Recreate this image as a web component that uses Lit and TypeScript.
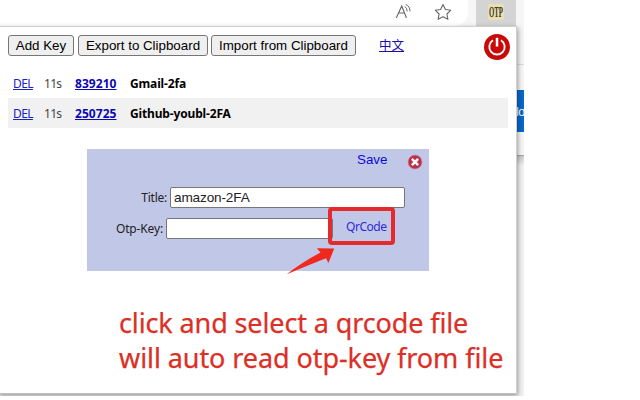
import { LitElement, html, css } from "lit";
import { customElement, property } from "lit/decorators.js";

interface Entry {
  code: string;
  name: string;
  left: number;
}

const entries: Entry[] = [
  { code: "839210", name: "Gmail-2fa", left: 11 },
  { code: "250725", name: "Github-youbl-2FA", left: 11 },
];

@customElement("otp-form")
class OtpForm extends LitElement {
  @property() name = "";

  static styles = css`
    :host {
      position: relative;
      display: block;
      width: 342px;
      height: 122px;
      box-sizing: border-box;
      background: #c1c8e7;
      font: 12px/16px "Noto Sans", sans-serif;
      color: #222;
    }
    .head { display: flex; height: 38px; padding-left: 270px; }
    .save {
      width: 30px;
      margin-top: 3px;
      font: 13.33px/16px "Liberation Sans", sans-serif;
      color: #0c08d8;
      white-space: nowrap;
    }
    .close { width: 16px; height: 16px; margin: 5px 0 0 19.5px; }
    .line { display: flex; align-items: center; height: 21px; margin-bottom: 10px; }
    .label { text-align: right; margin-right: 3px; white-space: nowrap; }
    .title { width: 80px; letter-spacing: -0.25px; }
    .key { width: 76px; letter-spacing: -0.15px; }
    .input {
      box-sizing: border-box;
      height: 21px;
      border: 1px solid #767676;
      border-radius: 2px;
      background: #fff;
      padding: 0 3px;
      margin: 0;
      font: 13.6px "Liberation Sans", sans-serif;
      color: #222;
      letter-spacing: -0.15px;
    }
    .wide { width: 235px; }
    .narrow { width: 167px; }
    .qr { margin-left: 13px; margin-top: -4px; color: #3029dc; letter-spacing: -0.45px; }
    .frame {
      position: absolute;
      left: 241px;
      top: 58px;
      width: 67px;
      height: 38px;
      box-sizing: border-box;
      border: 4px solid #e42a2a;
      border-radius: 4px;
    }
    .arrow { position: absolute; left: 198px; top: 96px; }
  `;

  render() {
    return html`
      <div class="head">
        <span class="save">Save</span>
        <svg class="close" viewBox="0 0 16 16">
          <circle cx="8" cy="8" r="7" fill="#b9304c" stroke="#d88ba5" stroke-width=".6" />
          <path d="M5.8 5.8 L10.2 10.2 M10.2 5.8 L5.8 10.2" stroke="#fff" stroke-width="2.5" stroke-linecap="square" />
        </svg>
      </div>
      <div class="line">
        <span class="label title">Title:</span>
        <input class="input wide" .value=${this.name} />
      </div>
      <div class="line">
        <span class="label key">Otp-Key:</span>
        <input class="input narrow" />
        <span class="qr">QrCode</span>
      </div>
      <div class="frame"></div>
      <svg class="arrow" width="52" height="32" viewBox="0 0 52 32">
        <path d="M1.7 29.3 Q18 16.5 35.5 7.6 L31.8 3.3 L49.2 3.6 L43.4 18 L41 13.2 Q21 21 1.7 29.3 Z" fill="#f0281e" />
      </svg>
    `;
  }
}

@customElement("app-root")
class AppRoot extends LitElement {
  static styles = css`
    :host {
      position: relative;
      display: block;
      width: 640px;
      height: 400px;
      overflow: hidden;
      background: #fff;
      font-family: "Noto Sans", "Noto Sans CJK SC", sans-serif;
    }
    .window { position: relative; width: 524px; height: 396px; overflow: hidden; background: #f5f5f5; }
    .toolbar { display: flex; height: 26px; background: #f6f6f6; }
    .omnibox {
      display: flex;
      box-sizing: border-box;
      width: 468px;
      height: 26px;
      padding-left: 394px;
      background: #fff;
      border-radius: 0 0 14px 0;
    }
    .extension {
      display: flex;
      justify-content: center;
      width: 40px;
      margin-left: 8px;
      background: #d4d4d4;
    }
    .otp { width: 16px; height: 16px; margin-top: 4px; overflow: visible; }
    .page { position: absolute; right: 0; top: 26px; width: 8px; height: 370px; background: #f3f3f3; }
    .bar { height: 38px; border-bottom: 1px solid #ddd; background: #f5f5f5; }
    .content { height: 91px; padding-top: 25px; box-sizing: border-box; border-bottom: 1px solid #aaa; background: #f7f7f7; }
    .blue {
      display: flex;
      align-items: center;
      height: 42px;
      background: #0669cb;
      color: #fff;
      font: 13px "Liberation Sans", sans-serif;
      letter-spacing: -0.8px;
    }
    .below { height: 9px; background: linear-gradient(#c8c8c8, #f1f1f1); }
    .popup {
      position: absolute;
      left: -2px;
      top: 26px;
      width: 519px;
      height: 368px;
      box-sizing: border-box;
      padding-left: 10px;
      border-top: 1px solid #d0d0d0;
      border-right: 1px solid #cfcfcf;
      border-bottom: 1px solid #c0c0c0;
      background: #fff;
      box-shadow: 1px 2px 5px rgba(0, 0, 0, 0.38);
    }
    .actions { display: flex; height: 42px; padding-top: 8px; box-sizing: border-box; }
    .btn {
      box-sizing: border-box;
      height: 21px;
      padding: 0;
      border: 1px solid #767676;
      border-radius: 3px;
      background: #efefef;
      font: 13.33px "Liberation Sans", sans-serif;
      color: #000;
      white-space: nowrap;
    }
    .add { width: 66px; margin-right: 4px; }
    .export { width: 130px; margin-right: 3px; }
    .import { width: 145px; }
    .lang { margin: 2px 0 0 23px; width: 26px; font-size: 12.5px; line-height: 18px; color: #1a0dab; text-decoration: underline; }
    .power { width: 28px; height: 28px; margin: -2px 0 0 77.5px; }
    .row {
      display: grid;
      grid-template-columns: 31px 31px 55px 1fr;
      align-items: center;
      width: 500px;
      height: 30px;
      padding-left: 5px;
      box-sizing: border-box;
      font-size: 12px;
      white-space: nowrap;
    }
    .rows { margin-top: -1px; }
    .odd { background: #f1f1f1; }
    .del { color: #1a22c0; text-decoration: underline; letter-spacing: -0.6px; }
    .time { color: #444; letter-spacing: -0.7px; }
    .code { color: #0a08b4; font-weight: 700; text-decoration: underline; letter-spacing: 0.05px; }
    .name { font-weight: 700; color: #000; letter-spacing: -0.15px; }
    .form { margin: 21px 0 0 79px; }
    .note { margin: 34px 0 0 111px; font-size: 27px; line-height: 35px; color: #dc2f26; white-space: nowrap; -webkit-text-stroke: 0.25px #dc2f26; }
    .first { letter-spacing: -0.12px; }
    .second { letter-spacing: -0.08px; }
  `;

  private row(e: Entry, i: number) {
    return html`<div class="row ${i % 2 ? "odd" : ""}">
      <span class="del">DEL</span><span class="time">${e.left}s</span>
      <span class="code">${e.code}</span><span class="name">${e.name}</span>
    </div>`;
  }

  render() {
    return html`
      <div class="window">
        <div class="toolbar">
          <div class="omnibox">
            <svg width="60" height="26" viewBox="0 0 60 26" fill="none" stroke="#666" stroke-width="1.1" stroke-linecap="round">
              <path d="M2.5 17.5 L7.7 6 L12.3 17.5 M4.7 13 H10.6" />
              <path d="M11 6.8 Q13.2 8 13.2 11 M12 4.5 Q16.3 6.7 16 11" stroke-width="1" />
              <path d="M49 4.5 L51.4 9.5 L56.8 10.2 L52.9 14 L53.9 19.3 L49 16.7 L44.1 19.3 L45.1 14 L41.2 10.2 L46.6 9.5 Z" stroke-linejoin="round" />
            </svg>
          </div>
          <div class="extension">
            <svg class="otp" viewBox="0 0 16 16">
              <rect width="16" height="16" rx="1.5" fill="#e9dfb2" />
              <text transform="translate(0.9 13.3) scale(0.44 1)" font-family="Liberation Serif, serif" font-weight="700" font-size="15.5" fill="#403820">OTP</text>
            </svg>
          </div>
        </div>
        <div class="page">
          <div class="bar"></div>
          <div class="content"><div class="blue">lo</div></div>
          <div class="below"></div>
        </div>
        <div class="popup">
          <div class="actions">
            <button class="btn add">Add Key</button>
            <button class="btn export">Export to Clipboard</button>
            <button class="btn import">Import from Clipboard</button>
            <span class="lang">中文</span>
            <svg class="power" viewBox="0 0 28 28">
              <circle cx="14" cy="14" r="13" fill="#cb0808" />
              <path d="M10 7.2 A7.7 7.7 0 1 0 18 7.2" fill="none" stroke="#fff" stroke-width="1.9" />
              <path d="M14 4.8 V13.5" stroke="#fff" stroke-width="2.5" />
            </svg>
          </div>
          <div class="rows">${entries.map((e, i) => this.row(e, i))}</div>
          <otp-form class="form" name="amazon-2FA"></otp-form>
          <div class="note">
            <div><span class="first">click and select a qrcode file</span></div>
            <div><span class="second">will auto read otp-key from file</span></div>
          </div>
        </div>
      </div>
    `;
  }
}
